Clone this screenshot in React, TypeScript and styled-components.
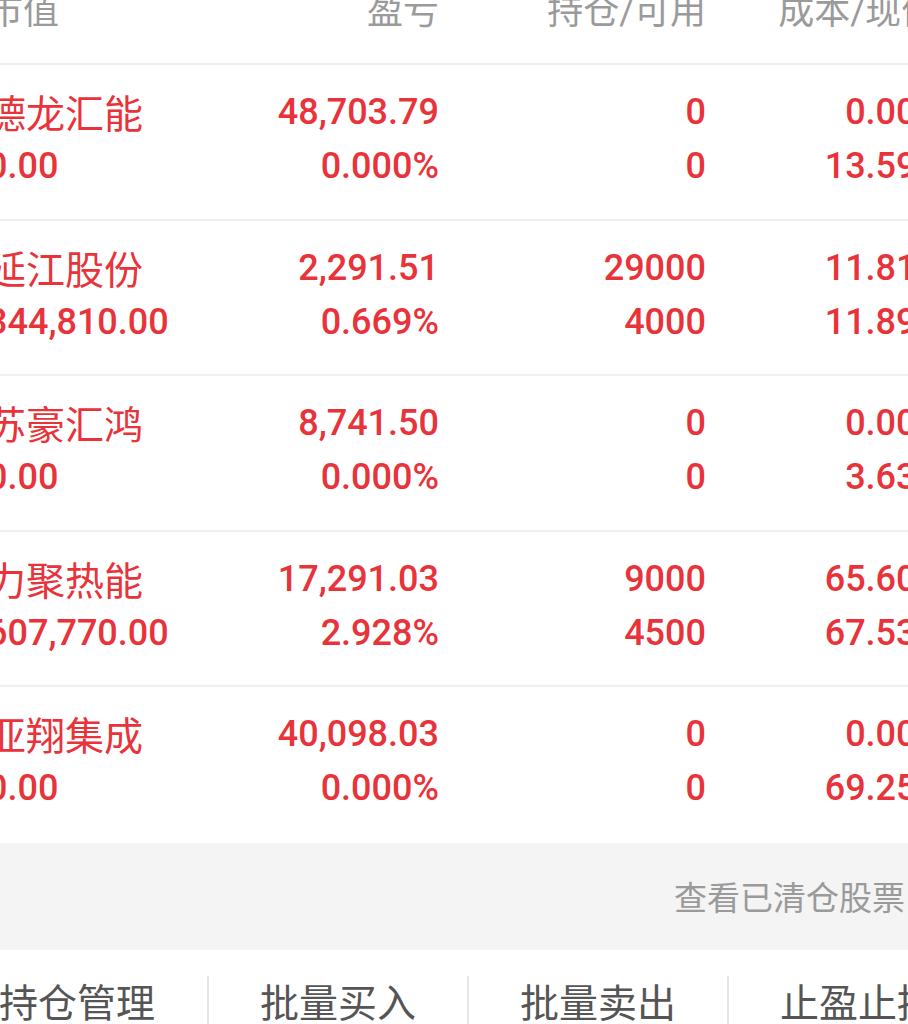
import React from 'react';
import styled, { createGlobalStyle } from 'styled-components';

const GlobalStyle = createGlobalStyle`
  html, body { margin: 0; padding: 0; background: #ffffff; }
  body {
    font-family: Roboto, "Noto Sans CJK SC", sans-serif;
    -webkit-font-smoothing: antialiased;
  }
`;

const Page = styled.div`
  width: 908px;
  height: 1024px;
  overflow: hidden;
  background: #ffffff;
`;

const Sheet = styled.div`
  margin-top: -20px;
  margin-left: -13px;
  width: 950px;
`;

const COLS = '185px 267px 267px 231px';

const HeaderRow = styled.div`
  display: grid;
  grid-template-columns: ${COLS};
  height: 85px;
  box-sizing: border-box;
  padding-top: 14px;
  border-bottom: 2px solid #eeeeee;
`;

const HeaderCell = styled.div<{ $align: 'left' | 'right' }>`
  font-size: 36px;
  line-height: 36px;
  color: #9a9a9a;
  text-align: ${(p) => p.$align};
  white-space: nowrap;
`;

const Row = styled.div<{ $last?: boolean }>`
  display: grid;
  grid-template-columns: ${COLS};
  height: 155.5px;
  box-sizing: border-box;
  padding-top: 20px;
  border-bottom: ${(p) => (p.$last ? 'none' : '2px solid #f0f0f0')};
`;

const Cell = styled.div<{ $align: 'left' | 'right' }>`
  display: flex;
  flex-direction: column;
  align-items: ${(p) => (p.$align === 'left' ? 'flex-start' : 'flex-end')};
  color: #e8333a;
  white-space: nowrap;
`;

const Name = styled.div`
  font-size: 39px;
  line-height: 54px;
  padding-top: 3px;
  height: 54px;
  box-sizing: border-box;
`;

const Num = styled.div`
  font-size: 36px;
  font-weight: 500;
  line-height: 54px;
`;

const ClearedBar = styled.div`
  height: 107px;
  background: #f4f4f4;
  display: flex;
  align-items: center;
  justify-content: flex-end;
  padding-right: 32px;
  font-size: 33px;
  color: #9a9a9a;
`;

const ActionBar = styled.div`
  margin-left: -40px;
  padding-top: 26px;
  display: flex;
  width: 1040px;
`;

const Action = styled.div<{ $first?: boolean }>`
  width: 260px;
  height: 80px;
  box-sizing: border-box;
  border-left: ${(p) => (p.$first ? 'none' : '2px solid #e6e6e6')};
  line-height: 56px;
  text-align: center;
  font-size: 39px;
  color: #555555;
  white-space: nowrap;
`;

type Holding = {
  name: string;
  value: string;
  pl: string;
  plPct: string;
  qty: string;
  avail: string;
  cost: string;
  price: string;
};

const holdings: Holding[] = [
  { name: '德龙汇能', value: '0.00', pl: '48,703.79', plPct: '0.000%', qty: '0', avail: '0', cost: '0.000', price: '13.590' },
  { name: '延江股份', value: '344,810.00', pl: '2,291.51', plPct: '0.669%', qty: '29000', avail: '4000', cost: '11.811', price: '11.890' },
  { name: '苏豪汇鸿', value: '0.00', pl: '8,741.50', plPct: '0.000%', qty: '0', avail: '0', cost: '0.000', price: '3.630' },
  { name: '力聚热能', value: '607,770.00', pl: '17,291.03', plPct: '2.928%', qty: '9000', avail: '4500', cost: '65.609', price: '67.530' },
  { name: '亚翔集成', value: '0.00', pl: '40,098.03', plPct: '0.000%', qty: '0', avail: '0', cost: '0.000', price: '69.250' },
];

const actions = ['持仓管理', '批量买入', '批量卖出', '止盈止损'];

export default function App() {
  return (
    <Page>
      <GlobalStyle />
      <Sheet>
        <HeaderRow>
          <HeaderCell $align="left">市值</HeaderCell>
          <HeaderCell $align="right">盈亏</HeaderCell>
          <HeaderCell $align="right">持仓/可用</HeaderCell>
          <HeaderCell $align="right">成本/现价</HeaderCell>
        </HeaderRow>
        {holdings.map((h, i) => (
          <Row key={h.name} $last={i === holdings.length - 1}>
            <Cell $align="left">
              <Name>{h.name}</Name>
              <Num>{h.value}</Num>
            </Cell>
            <Cell $align="right">
              <Num>{h.pl}</Num>
              <Num>{h.plPct}</Num>
            </Cell>
            <Cell $align="right">
              <Num>{h.qty}</Num>
              <Num>{h.avail}</Num>
            </Cell>
            <Cell $align="right">
              <Num>{h.cost}</Num>
              <Num>{h.price}</Num>
            </Cell>
          </Row>
        ))}
        <ClearedBar>查看已清仓股票</ClearedBar>
        <ActionBar>
          {actions.map((a, i) => (
            <Action key={a} $first={i === 0}>
              {a}
            </Action>
          ))}
        </ActionBar>
      </Sheet>
    </Page>
  );
}
